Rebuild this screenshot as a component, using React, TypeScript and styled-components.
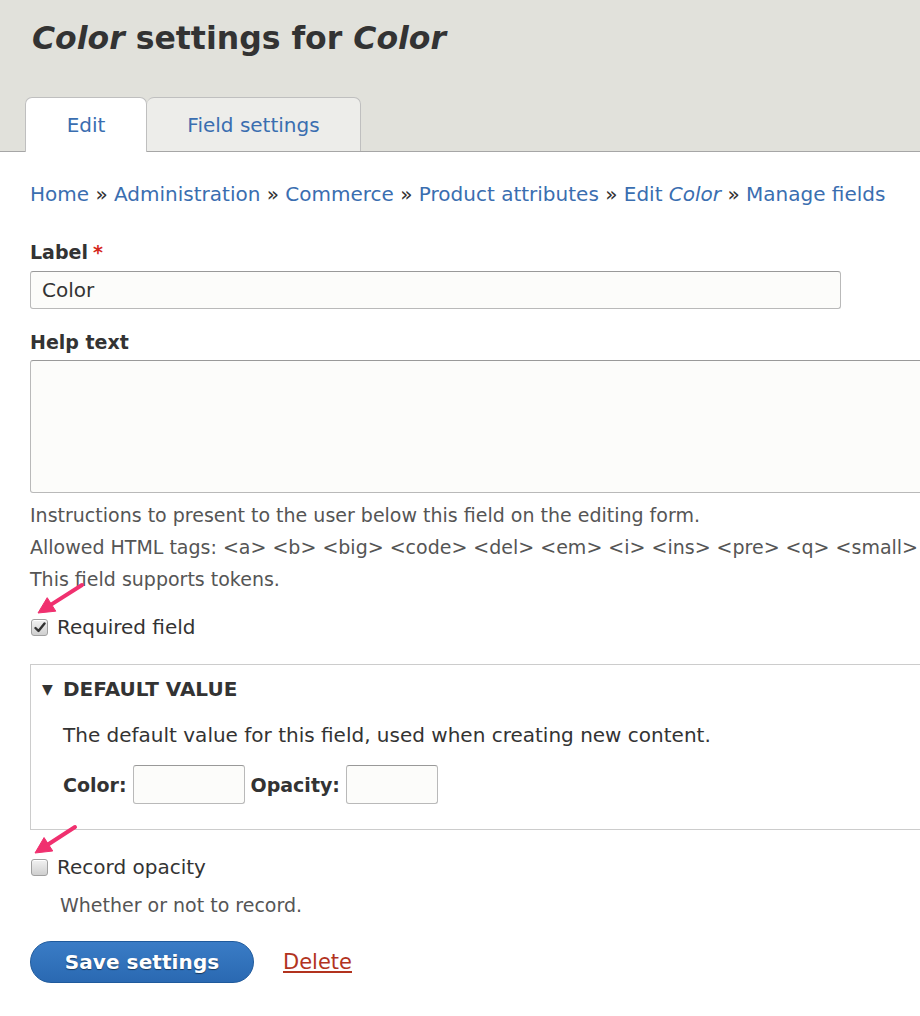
import React from "react";
import styled, { createGlobalStyle } from "styled-components";

const Global = createGlobalStyle`
  html, body { margin: 0; padding: 0; background: #fff; overflow: hidden; }
  body { font-family: "DejaVu Sans", "Liberation Sans", sans-serif; color: #333; width: 920px; height: 1016px; }
  * { box-sizing: border-box; }
`;

const Header = styled.header`
  background: #e1e1db;
  border-bottom: 1px solid #a6a6a6;
  padding: 14px 0 0 32px;
  height: 152px;
  display: flex;
  flex-direction: column;
`;

const Title = styled.h1`
  margin: 0;
  font-size: 31.5px;
  line-height: 48px;
  font-weight: bold;
  color: #333;
  em { font-style: italic; }
`;

const Tabs = styled.nav`
  display: flex;
  margin: 35px 0 0 -7px;
`;

const Tab = styled.a<{ $active?: boolean }>`
  display: flex;
  align-items: center;
  justify-content: center;
  height: ${(p) => (p.$active ? "55px" : "54px")};
  width: ${(p) => (p.$active ? "122px" : "214px")};
  background: ${(p) => (p.$active ? "#fff" : "#ededea")};
  border: 1px solid #bfbfbf;
  border-bottom: none;
  border-left: ${(p) => (p.$active ? "1px solid #bfbfbf" : "none")};
  border-radius: 7px 7px 0 0;
  color: #3a6eb0;
  font-size: 20px;
  text-decoration: none;
  position: relative;
  z-index: ${(p) => (p.$active ? 1 : 0)};
`;

const Main = styled.main`
  padding: 27px 0 0 30px;
`;

const Breadcrumb = styled.div`
  font-size: 20px;
  line-height: 30px;
  color: #333;
  white-space: nowrap;
  a { color: #3a6eb0; text-decoration: none; }
  em { font-style: italic; }
`;

const FieldLabel = styled.div<{ $mt: number }>`
  margin-top: ${(p) => p.$mt}px;
  font-size: 19px;
  line-height: 24px;
  font-weight: bold;
  color: #333;
  span { color: #d5261c; margin-left: 5px; }
`;

const TextInput = styled.div<{ $w: number; $h: number; $mt?: number }>`
  margin-top: ${(p) => p.$mt ?? 0}px;
  width: ${(p) => p.$w}px;
  height: ${(p) => p.$h}px;
  flex-shrink: 0;
  background: #fcfcfa;
  border: 1px solid #b9b9b9;
  border-top-color: #999;
  border-radius: 3px;
  font-size: 20px;
  line-height: 36px;
  padding: 0 11px;
  color: #333;
`;

const Description = styled.div<{ $mt?: number; $ml?: number; $dark?: boolean; $size?: number; $lh?: number }>`
  margin-top: ${(p) => p.$mt ?? 0}px;
  margin-left: ${(p) => p.$ml ?? 0}px;
  font-size: ${(p) => p.$size ?? 19}px;
  line-height: ${(p) => p.$lh ?? 32}px;
  color: ${(p) => (p.$dark ? "#333" : "#555")};
  white-space: nowrap;
`;

const CheckRow = styled.label<{ $mt: number }>`
  margin-top: ${(p) => p.$mt}px;
  display: flex;
  align-items: center;
  height: 30px;
  font-size: 20px;
  color: #333;
  position: relative;
`;

const Box = styled.span`
  width: 17px;
  height: 17px;
  margin: 0 9px 0 1px;
  border: 1px solid #a0a0a0;
  border-radius: 3px;
  background: linear-gradient(#f2f2f2, #cfcfcf);
  box-shadow: inset 0 1px 0 #fff;
  display: flex;
  align-items: center;
  justify-content: center;
`;

const ArrowSvg = styled.svg`
  position: absolute;
  left: 0;
  top: -38px;
  pointer-events: none;
`;

const Fieldset = styled.section`
  margin-top: 22px;
  width: 1000px;
  border: 1px solid #cccccc;
  padding: 9px 0 25px 32px;
`;

const Legend = styled.div`
  margin-left: -21px;
  display: flex;
  align-items: center;
  height: 30px;
  font-size: 20px;
  font-weight: bold;
  text-transform: uppercase;
  color: #333;
  span { font-size: 14px; width: 21px; }
`;

const InlineRow = styled.div`
  margin-top: 15px;
  display: flex;
  align-items: center;
  gap: 6px;
`;

const InlineLabel = styled.span`
  font-size: 19px;
  font-weight: bold;
  color: #333;
`;

const Actions = styled.div`
  margin-top: 20px;
  display: flex;
  align-items: center;
  gap: 29px;
`;

const Button = styled.button`
  width: 224px;
  height: 42px;
  border-radius: 21px;
  border: 1px solid #1f5a9c;
  background: linear-gradient(#3a7cc6, #2a69b2);
  color: #fff;
  font-family: inherit;
  font-size: 20px;
  font-weight: bold;
  letter-spacing: 0.1px;
  text-shadow: 0 1px 1px rgba(0,0,0,0.5);
  padding: 0;
`;

const DeleteLink = styled.a`
  color: #b2331e;
  font-size: 21px;
  text-decoration: underline;
`;

const Check = () => (
  <svg width="12" height="11" viewBox="0 0 12 11">
    <path d="M1.5 6 L4.5 9 L10.5 1.5" fill="none" stroke="#333" strokeWidth="2.4" strokeLinecap="round" strokeLinejoin="round" />
  </svg>
);

type Pt = [number, number];
const PinkArrow = ({ tip, tail }: { tip: Pt; tail: Pt }) => {
  const dx = tail[0] - tip[0];
  const dy = tail[1] - tip[1];
  const len = Math.hypot(dx, dy);
  const ux = dx / len;
  const uy = dy / len;
  const bx = tip[0] + ux * 16;
  const by = tip[1] + uy * 16;
  const w1: Pt = [bx - uy * 8, by + ux * 8];
  const w2: Pt = [bx + uy * 8, by - ux * 8];
  return (
    <ArrowSvg width="90" height="50" viewBox="0 0 90 50">
      <line x1={tail[0]} y1={tail[1]} x2={bx} y2={by} stroke="#f0306f" strokeWidth="4" strokeLinecap="round" />
      <polygon points={`${tip[0]},${tip[1]} ${w1[0]},${w1[1]} ${w2[0]},${w2[1]}`} fill="#f0306f" stroke="#f0306f" strokeWidth="1" strokeLinejoin="round" />
    </ArrowSvg>
  );
};

export default function App() {
  return (
    <>
      <Global />
      <Header>
        <Title>
          <em>Color</em> settings for <em>Color</em>
        </Title>
        <Tabs>
          <Tab $active>Edit</Tab>
          <Tab>Field settings</Tab>
        </Tabs>
      </Header>
      <Main>
        <Breadcrumb>
          <a>Home</a> » <a>Administration</a> » <a>Commerce</a> » <a>Product attributes</a> » <a>Edit <em>Color</em></a> » <a>Manage fields</a>
        </Breadcrumb>
        <FieldLabel $mt={31}>
          Label<span>*</span>
        </FieldLabel>
        <TextInput $w={811} $h={38} $mt={7}>Color</TextInput>
        <FieldLabel $mt={21}>Help text</FieldLabel>
        <TextInput $w={1000} $h={133} $mt={6} />
        <Description $mt={6}>Instructions to present to the user below this field on the editing form.</Description>
        <Description>Allowed HTML tags: &lt;a&gt; &lt;b&gt; &lt;big&gt; &lt;code&gt; &lt;del&gt; &lt;em&gt; &lt;i&gt; &lt;ins&gt; &lt;pre&gt; &lt;q&gt; &lt;small&gt;</Description>
        <Description>This field supports tokens.</Description>
        <CheckRow $mt={17}>
          <PinkArrow tip={[8, 39]} tail={[52, 11]} />
          <Box>
            <Check />
          </Box>
          Required field
        </CheckRow>
        <Fieldset>
          <Legend>
            <span>▼</span>Default value
          </Legend>
          <Description $mt={16} $dark $size={20} $lh={30}>
            The default value for this field, used when creating new content.
          </Description>
          <InlineRow>
            <InlineLabel>Color:</InlineLabel>
            <TextInput $w={112} $h={39} />
            <InlineLabel>Opacity:</InlineLabel>
            <TextInput $w={92} $h={39} />
          </InlineRow>
        </Fieldset>
        <CheckRow $mt={22}>
          <PinkArrow tip={[5, 39]} tail={[45, 13]} />
          <Box />
          Record opacity
        </CheckRow>
        <Description $mt={7} $ml={30}>Whether or not to record.</Description>
        <Actions>
          <Button>Save settings</Button>
          <DeleteLink>Delete</DeleteLink>
        </Actions>
      </Main>
    </>
  );
}
